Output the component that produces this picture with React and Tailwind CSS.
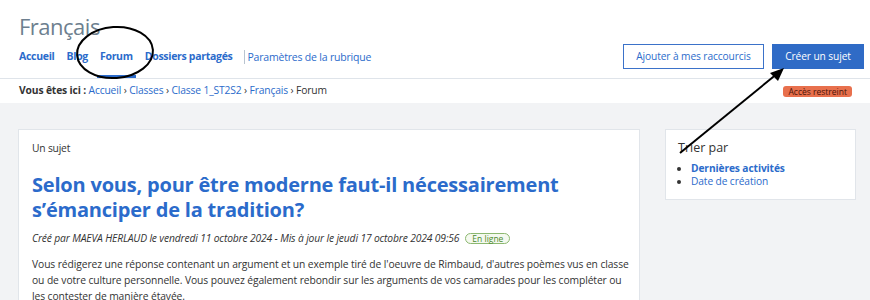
import React from 'react'

const navLinks = [
  { label: 'Accueil' },
  { label: 'Blog' },
  { label: 'Forum', active: true },
  { label: 'Dossiers partagés' },
]

const crumbs = ['Accueil', 'Classes', 'Classe 1_ST2S2', 'Français']

export default function App() {
  return (
    <div className="relative w-[870px] h-[300px] overflow-hidden bg-[#f2f3f5] font-['Open_Sans',sans-serif] text-[#333]">
      {/* Header */}
      <header className="bg-white">
        <div className="flex justify-between pr-[6px] border-b border-[#dfe4ea]">
          <div>
            <h1 className="pl-[19px] pt-[12px] text-[22px] leading-[28px] text-[#6d7f8f] tracking-[-0.5px]">Français</h1>
            <nav className="flex items-end gap-[6px] pl-[16px] mt-[8px] text-[10.5px] leading-[16px] tracking-[-0.3px]">
              {navLinks.map((l) => (
                <a
                  key={l.label}
                  className={`px-[3px] pb-[11px] border-b-[3px] font-bold text-[#2b6bcb] ${
                    l.active ? 'border-[#2b6bcb]' : 'border-transparent'
                  }`}
                >
                  {l.label}
                </a>
              ))}
              <a className="ml-[3px] pb-[14px] text-[#2b6bcb] tracking-[-0.2px]">
                <span className="block pl-[2px] border-l border-[#b9c4d0] leading-[14px]">Paramètres de la rubrique</span>
              </a>
            </nav>
          </div>
          <div className="flex gap-[8px] mt-[44px] h-[25px] text-[10.2px] tracking-[-0.1px]">
            <button className="w-[141px] border border-[#3b72c9] bg-white text-[#2b6bcb]">
              Ajouter à mes raccourcis
            </button>
            <button className="w-[92px] bg-[#2f6bc6] text-white">Créer un sujet</button>
          </div>
        </div>
        <div className="flex items-center justify-between h-[24px] pl-[19px] pr-[18px]">
          <p className="text-[10.3px] tracking-[-0.15px]">
            <span className="font-bold">Vous êtes ici :</span>{' '}
            {crumbs.map((c) => (
              <span key={c}>
                <a className="text-[#2b6bcb]">{c}</a> ›{' '}
              </span>
            ))}
            Forum
          </p>
          <span className="px-[5px] h-[11px] leading-[11px] rounded-[3px] bg-[#e8704d] text-[8.5px] text-[#4a1408]">
            Accès restreint
          </span>
        </div>
      </header>

      {/* Content */}
      <main className="flex gap-[25px] pl-[18px] pt-[26px]">
        <section className="w-[622px] bg-white border border-[#e1e5ea] pl-[13px] pr-[4px] pt-[10px] pb-[20px]">
          <p className="text-[10.3px] leading-[16px] tracking-[-0.2px]">Un sujet</p>
          <h2 className="mt-[16px] text-[20px] leading-[25px] font-bold text-[#2b6bcb] tracking-[-0.2px]">
            Selon vous, pour être moderne faut-il nécessairement s’émanciper de la tradition?
          </h2>
          <p className="mt-[8px] flex items-center text-[10.3px] leading-[16px] tracking-[-0.15px] italic">
            Créé par MAEVA HERLAUD le vendredi 11 octobre 2024 - Mis à jour le jeudi 17 octobre 2024 09:56
            <span className="ml-[6px] px-[6px] h-[11px] leading-[9px] rounded-full border border-[#8cb870] bg-[#f4f9ef] text-[8.5px] not-italic tracking-normal text-[#4d8a2e]">
              En ligne
            </span>
          </p>
          <p className="mt-[10px] text-[10.3px] leading-[16px] tracking-[-0.1px]">
            Vous rédigerez une réponse contenant un argument et un exemple tiré de l'oeuvre de Rimbaud, d'autres poèmes vus en classe ou de votre culture personnelle. Vous pouvez également rebondir sur les arguments de vos camarades pour les compléter ou les contester de manière étayée.
          </p>
        </section>

        <aside className="self-start w-[191px] bg-white border border-[#e1e5ea] pl-[12px] pt-[9px] pb-[11px]">
          <h3 className="text-[12.5px] leading-[18px]">Trier par</h3>
          <ul className="mt-[5px] list-disc pl-[13px] text-[10.2px] leading-[13px] tracking-[-0.1px] text-[#2b6bcb] marker:text-[#333]">
            <li className="font-bold">Dernières activités</li>
            <li>Date de création</li>
          </ul>
        </aside>
      </main>

      {/* Annotations drawn over the screenshot */}
      <svg className="absolute inset-0 pointer-events-none" width="870" height="300">
        <ellipse cx="115" cy="52.5" rx="38" ry="25.5" transform="rotate(-4 115 52.5)" fill="none" stroke="#000" strokeWidth="2" />
        <line x1="680" y1="153" x2="778" y2="73" stroke="#000" strokeWidth="2" />
        <polygon points="784,68 770,73 778,81" fill="#000" />
      </svg>
    </div>
  )
}
